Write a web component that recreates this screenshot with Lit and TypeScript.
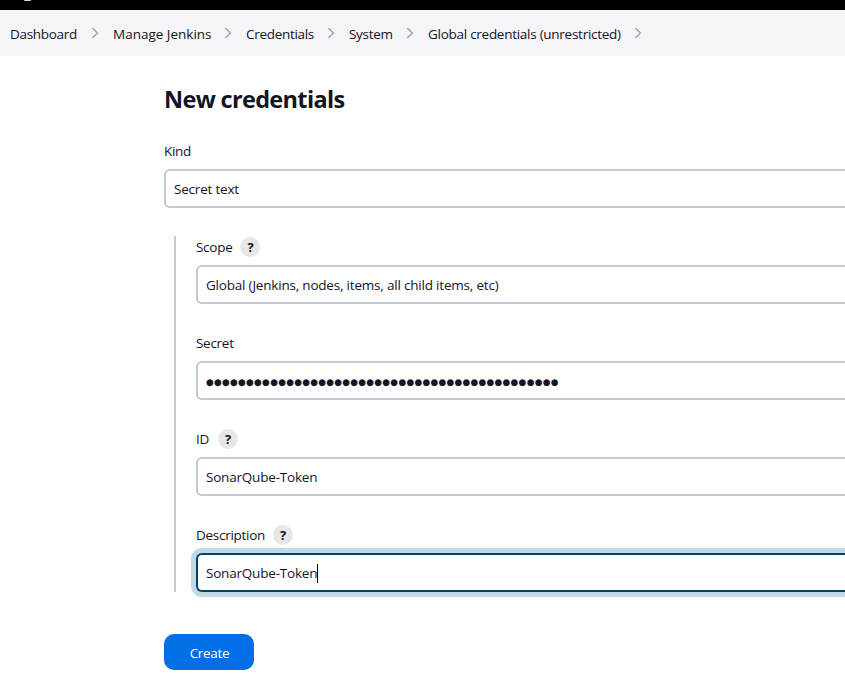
import { LitElement, html, css, nothing } from "lit";
import { customElement, property } from "lit/decorators.js";

const base = css`
  * { box-sizing: border-box; }
  :host { display: block; }
`;

@customElement("bread-crumbs")
class BreadCrumbs extends LitElement {
  static styles = [base, css`
    .bar { display: flex; align-items: center; height: 46px; padding-left: 10px; background: #f5f5f8; white-space: nowrap; overflow: hidden; }
    .crumb { flex: none; line-height: 20px; padding-top: 2px; }
    .chevron { flex: none; display: block; width: 8px; height: 12px; margin: 0 14px 0 13px; }
  `];
  items = [
    { label: "Dashboard", width: 68, spacing: -0.3 },
    { label: "Manage Jenkins", width: 98, spacing: 0 },
    { label: "Credentials", width: 68, spacing: -0.3 },
    { label: "System", width: 44, spacing: -0.3 },
    { label: "Global credentials (unrestricted)", width: 193, spacing: -0.27 },
  ];
  render() {
    return html`<nav class="bar">${this.items.map((i) => html`
      <span class="crumb" style="width:${i.width}px;letter-spacing:${i.spacing}px">${i.label}</span>
      <svg class="chevron" viewBox="0 0 8 12" fill="none" stroke="#a9a9b9" stroke-width="1.6"><path d="M1.4 1.2 6.4 6 1.4 10.8" /></svg>`)}</nav>`;
  }
}

@customElement("form-field")
class FormField extends LitElement {
  @property() label = "";
  @property() value = "";
  @property({ type: Boolean }) help = false;
  @property({ type: Boolean }) secret = false;
  @property({ type: Boolean }) focused = false;
  static styles = [base, css`
    .label { display: flex; align-items: center; height: 20px; margin-bottom: 8px; gap: 8px; letter-spacing: -0.28px; }
    .name { min-width: 14px; }
    .help { width: 20px; height: 20px; border-radius: 50%; background: #e7e7e8; font-size: 13px; font-weight: 700; line-height: 20px; text-align: center; }
    .box { display: flex; align-items: center; height: 39px; padding: 1px 8px 0; border: 2px solid #c1cbcf; border-right: 0; border-radius: 6px 0 0 6px; background: #fff; white-space: nowrap; }
    .focused { border-color: #044169; box-shadow: 0 0 0 5px #c0d9e6; }
    .dots { font-family: "DejaVu Sans", sans-serif; font-size: 8.8px; letter-spacing: 0.34px; padding-top: 1px; }
    .caret { width: 1px; height: 19px; background: #000; }
  `];
  render() {
    return html`
      <div class="label"><span class="name">${this.label}</span>${this.help ? html`<span class="help">?</span>` : nothing}</div>
      <div class="box ${this.focused ? "focused" : ""}">
        <span class=${this.secret ? "dots" : "value"}>${this.value}</span>${this.focused ? html`<span class="caret"></span>` : nothing}
      </div>`;
  }
}

@customElement("app-root")
class AppRoot extends LitElement {
  static styles = [base, css`
    :host { height: 681px; overflow: hidden; background: #fff; color: #14141f; font: 13.5px/20px "Open Sans", "Noto Sans", sans-serif; letter-spacing: -0.2px; }
    .header { height: 10px; background: #000; overflow: hidden; padding-left: 24px; }
    .mark { width: 7px; height: 1px; background: #ddd; border-radius: 0 0 2px 2px; }
    .main { padding-left: 164px; }
    .title { margin: 0; padding-top: 27px; font-size: 23.5px; line-height: 32px; font-weight: 700; letter-spacing: -0.67px; }
    .kind { margin-top: 26px; }
    .group { display: flex; flex-direction: column; gap: 29px; margin: 28px 0 0 10px; padding: 1px 0 0 20px; border-left: 2px solid #c1cbcf; height: 356px; }
    .create { display: block; width: 90px; height: 36px; margin-top: 42px; padding: 2px 0 0 1px; border: 0; border-radius: 10px; background: #006fe6; color: #fff; font: inherit; letter-spacing: -0.3px; }
  `];
  render() {
    return html`
      <div class="header"><div class="mark"></div></div>
      <bread-crumbs></bread-crumbs>
      <main class="main">
        <h1 class="title">New credentials</h1>
        <form-field class="kind" label="Kind" value="Secret text"></form-field>
        <section class="group">
          <form-field label="Scope" help value="Global (Jenkins, nodes, items, all child items, etc)"></form-field>
          <form-field label="Secret" secret value=${"●".repeat(44)}></form-field>
          <form-field label="ID" help value="SonarQube-Token"></form-field>
          <form-field label="Description" help focused value="SonarQube-Token"></form-field>
        </section>
        <button class="create">Create</button>
      </main>`;
  }
}
